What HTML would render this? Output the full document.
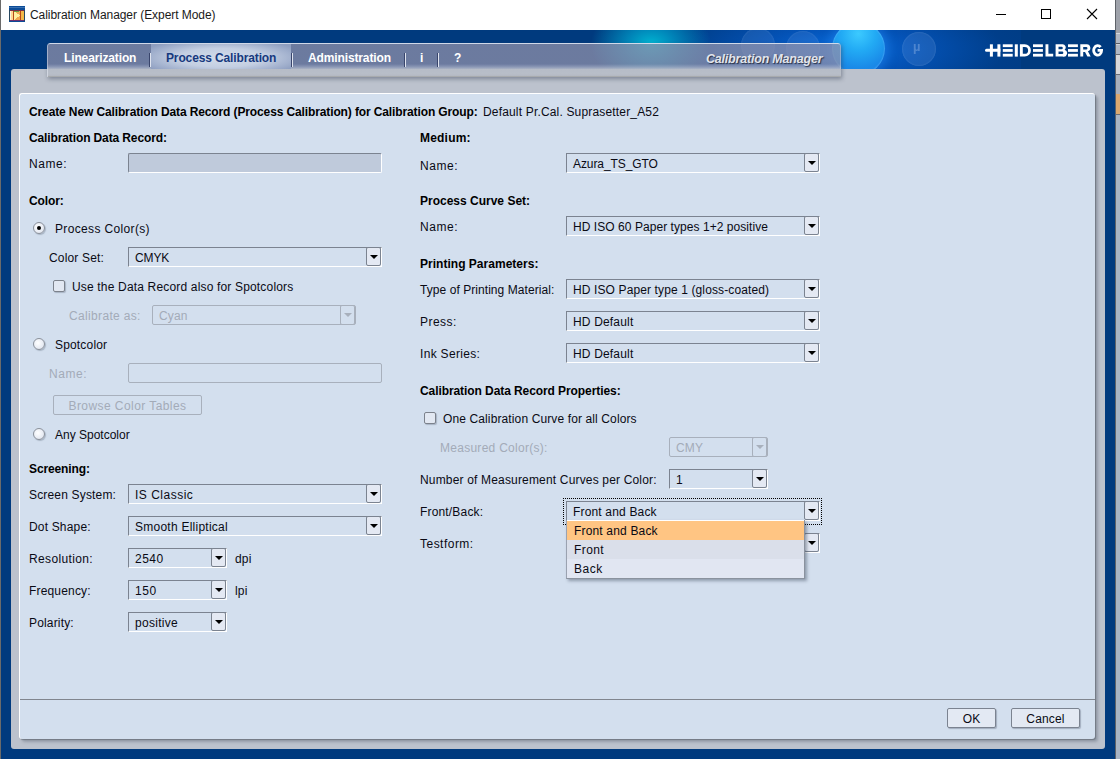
<!DOCTYPE html>
<html><head><meta charset="utf-8">
<style>
*{margin:0;padding:0;box-sizing:border-box}
html,body{width:1120px;height:759px;overflow:hidden;background:#a9b2c1;font-family:"Liberation Sans",sans-serif;font-size:12px;color:#0a0a14}
.a{position:absolute}
#strip{left:1116px;top:0;width:4px;height:759px;background:linear-gradient(to bottom,#9ea2aa 0,#9ea2aa 33px,#d4d8de 33px,#d4d8de 34px,#b0b8c4 34px,#b0b8c4 43px,#5a5e66 43px,#5a5e66 44px,#d0d4da 44px,#d0d4da 45px,#b0b8c4 45px,#b0b8c4 54px,#6a6e76 54px,#6a6e76 55px,#d8d8da 55px,#d8d8da 74px,#6a6e76 74px,#6a6e76 75px,#a8b0bc 75px,#a8b0bc 94px,#daa870 94px,#daa870 114px,#6a6e76 114px,#6a6e76 115px,#a8b4c4 115px)}
#win{left:0;top:0;width:1116px;height:759px;background:#003a7e;border-left:1px solid #6a6a6a;border-right:1px solid #5e6268;overflow:hidden}
#title{left:0;top:0;width:1116px;height:30px;background:#fff}
#ttext{left:30px;top:8px;font-size:12px;color:#1a1a1a;letter-spacing:-0.06px;white-space:nowrap}
#gray{left:11px;top:69px;width:1094px;height:680px;background:#bcc2cd;border-radius:3px}
#panel{left:19px;top:93px;width:1076px;height:646px;background:#d3dfee;border-radius:3px;border-top:1px solid #fff;border-left:1px solid #fff;box-shadow:1px 1px 1px rgba(90,96,106,.6),3px 3px 3px rgba(90,100,115,.4)}
#tabbar{left:47px;top:43px;width:794px;height:34px;border-radius:3px 3px 0 0;overflow:hidden;box-shadow:1px 2px 4px rgba(50,60,80,.45)}
#tabup{left:0;top:0;width:794px;height:26px;border-top:1px solid rgba(215,225,240,.85);border-left:1px solid rgba(200,210,230,.6);border-right:1px solid rgba(200,210,230,.4);border-radius:3px 3px 0 0;
 background:linear-gradient(to bottom,rgba(144,145,171,.75) 0,rgba(144,145,171,.75) 80%,rgba(165,170,192,.85) 92%,rgba(180,186,200,.95) 100%)}
#tablo{left:0;top:26px;width:794px;height:8px;border-left:1px solid rgba(220,225,235,.7);background:linear-gradient(to bottom,#b6bcc7 0,#b8bec8 60%,#b4b9c2 85%,#9e9f9e 100%)}
.tab{top:51px;font-weight:bold;color:#fff;letter-spacing:-0.13px;white-space:nowrap;font-size:12px}
.sep{top:53px;width:2px;height:14px;border-left:1px solid #39456c;border-right:1px solid #dfe4ef}
#seltab{left:151px;top:44px;width:140px;height:25px;background:radial-gradient(ellipse 62% 75% at 50% 55%,#d2dcea 0,#c4cfe2 50%,#9eadcb 85%,#8e9ec0 100%)}
.t{position:absolute;white-space:nowrap;letter-spacing:0.17px;line-height:14px}
.b{font-weight:bold;letter-spacing:-0.12px;color:#000}
.dis{color:#a3abb8}
.cb{position:absolute;height:20px;border-top:1px solid #7b8390;border-left:1px solid #7b8390;border-bottom:1px solid #fff;border-right:1px solid #fff;background:#d3dfee}
.cb .v{position:absolute;left:6px;top:3px;white-space:nowrap;letter-spacing:0.17px;line-height:14px}
.cb .ab{position:absolute;right:0;top:-1px;width:15px;height:19px;background:#e4e9f3;border:1px solid #7b8390;border-radius:2px}
.cb .ab:after{content:"";position:absolute;left:3px;top:7px;border-left:4px solid transparent;border-right:4px solid transparent;border-top:4px solid #000}
.cb.d{border-color:#a8b0bc;border-radius:2px}
.cb.d .ab{background:#d3dfee;border-color:#a8b0bc;top:-1px;height:20px;border-radius:2px}
.cb.d .ab:after{border-top-color:#a8b0bc}
.cb.d .v{color:#a3abb8}
.inp{position:absolute;height:20px;border-top:1px solid #7b8390;border-left:1px solid #7b8390;border-bottom:1px solid #fff;border-right:1px solid #fff;background:#bfcadb;border-radius:2px}
.inp.d{background:transparent;border-color:#a8b0bc}
.rad{position:absolute;width:12px;height:12px;border-radius:50%;border:1px solid #8a909a;background:radial-gradient(circle at 40% 40%,#fff 0,#e8ecf4 60%,#d8dee8 100%);box-shadow:1px 1px 1px rgba(90,100,120,.35)}
.rad.on:after{content:"";position:absolute;left:3px;top:3px;width:4px;height:4px;border-radius:50%;background:#000}
.chk{position:absolute;width:12px;height:12px;border-radius:2px;border:1px solid #7c828c;background:#e2e8f2;box-shadow:1px 1px 1px rgba(90,100,120,.35)}
.btn{position:absolute;height:20px;border:1px solid #7b8390;border-radius:2px;background:#e3e9f3;box-shadow:1px 1px 1px rgba(90,100,120,.4);text-align:center;line-height:19px;letter-spacing:0.17px;padding-top:1px}
.btn.d{background:transparent;border-color:#a8b0bc;box-shadow:none;color:#a3abb8}
</style></head><body>
<div id="strip" class="a"></div>
<div id="win" class="a">
 <div id="title" class="a"></div>
</div>
<!-- title bar content -->
<svg class="a" style="left:9px;top:6px" width="16" height="16" viewBox="0 0 16 16" shape-rendering="crispEdges">
 <rect x="0" y="0" width="16" height="16" fill="#0c4c98"/>
 <rect x="0" y="1" width="16" height="1" fill="#3a70b0"/>
 <rect x="1" y="4" width="14" height="11" fill="#f0a850"/>
 <rect x="0" y="4" width="1" height="11" fill="#284860"/>
 <rect x="15" y="4" width="1" height="11" fill="#284860"/>
 <rect x="1" y="4" width="14" height="1" fill="#7a3048"/>
 <rect x="1" y="14" width="14" height="1" fill="#6a3070"/>
 <rect x="1" y="5" width="1" height="9" fill="#fff4e0"/>
 <rect x="2" y="5" width="2" height="9" fill="#ffd890"/>
 <rect x="4" y="5" width="1" height="9" fill="#b84818"/>
 <path d="M5 5 L11 9.5 L5 14 Z" fill="#fff0a0"/>
 <rect x="5" y="5" width="5" height="1" fill="#68a048"/>
 <rect x="11" y="5" width="1" height="9" fill="#b84818"/>
 <rect x="12" y="5" width="3" height="9" fill="#f4b848"/>
</svg>
<div id="ttext" class="a">Calibration Manager (Expert Mode)</div>
<svg class="a" style="left:990px;top:5px" width="120" height="20">
 <rect x="6" y="9" width="10" height="1" fill="#000"/>
 <rect x="51.5" y="4.5" width="9" height="9" fill="none" stroke="#000" stroke-width="1"/>
 <path d="M97 4 L107 14 M107 4 L97 14" stroke="#000" stroke-width="1.1"/>
</svg>

<!-- header background glows -->
<div class="a" style="left:1px;top:30px;width:1114px;height:39px;overflow:hidden">
 <div class="a" style="left:520px;top:-60px;width:500px;height:160px;background:radial-gradient(ellipse 50% 50% at 64% 50%,rgba(10,110,225,.95) 0,rgba(5,90,200,.75) 30%,rgba(0,70,160,.35) 65%,rgba(0,58,126,0) 100%)"></div>
 <div class="a" style="left:590px;top:-28px;width:120px;height:84px;background:radial-gradient(ellipse 50% 50% at 50% 50%,rgba(0,180,210,1) 0,rgba(0,155,200,.75) 40%,rgba(0,100,170,0) 100%)"></div>
 <div class="a" style="left:740px;top:-2px;width:34px;height:34px;border-radius:50%;background:rgba(140,180,235,.14);box-shadow:inset 0 0 2px rgba(170,200,240,.25)"></div>
 <div class="a" style="left:785px;top:1px;width:34px;height:34px;border-radius:50%;background:rgba(140,180,235,.14);box-shadow:inset 0 0 2px rgba(170,200,240,.25)"></div>
 <div class="a" style="left:831px;top:-8px;width:53px;height:53px;border-radius:50%;background:radial-gradient(circle at 50% 22%,#3ccaff 0,#22aaf4 35%,#1a8ae8 70%,#1e80e4 100%);box-shadow:0 0 10px 4px rgba(30,130,235,.55),inset 0 0 1px 1px rgba(110,190,255,.35)"></div>
 <div class="a" style="left:901px;top:2px;width:34px;height:34px;border-radius:50%;background:rgba(140,180,235,.16);box-shadow:inset 0 0 2px rgba(170,200,240,.3)"></div>
 <div class="a" style="left:912px;top:9px;font-size:13px;color:rgba(200,220,250,.3);font-weight:bold;filter:blur(0.6px)">µ</div>
</div>
<!-- HEIDELBERG logo -->
<svg class="a" style="left:985px;top:44px" width="120" height="14" viewBox="0 -0.3 120 14" fill="#fff">
 <path d="M1.5 4.5 H15.4 V7.5 H1.5 A1.5 1.5 0 0 1 1.5 4.5 Z"/>
 <rect x="4.9" y="0" width="3" height="12.3"/>
 <rect x="12.4" y="0" width="3" height="12.3"/>
 <rect x="17.8" y="0" width="9.9" height="2.8"/><rect x="17.8" y="4.75" width="9.9" height="2.8"/><rect x="17.8" y="9.5" width="9.9" height="2.8"/>
 <rect x="29.8" y="0" width="3" height="12.3"/>
 <path fill-rule="evenodd" d="M34.9 0 H39.8 A6.1 6.15 0 0 1 39.8 12.3 H34.9 Z M37.8 2.8 H39.8 A3.3 3.35 0 0 1 39.8 9.5 H37.8 Z"/>
 <rect x="48" y="0" width="9.9" height="2.8"/><rect x="48" y="4.75" width="9.9" height="2.8"/><rect x="48" y="9.5" width="9.9" height="2.8"/>
 <path d="M60.5 0 H63.4 V9.5 H68.2 V12.3 H60.5 Z"/>
 <path fill-rule="evenodd" d="M70.6 0 H77 A3.1 3.1 0 0 1 79.6 5.4 A3.3 3.4 0 0 1 77.5 12.3 H70.6 Z M73.5 2.5 V4.9 H76.6 A1.2 1.2 0 0 0 76.6 2.5 Z M73.5 7.3 V9.8 H77.1 A1.25 1.25 0 0 0 77.1 7.3 Z"/>
 <rect x="83" y="0" width="9.9" height="2.8"/><rect x="83" y="4.75" width="9.9" height="2.8"/><rect x="83" y="9.5" width="9.9" height="2.8"/>
 <path fill-rule="evenodd" d="M95.3 0 H101.5 A3.6 3.6 0 0 1 102.9 7.0 L105.7 12.3 H102.4 L100.0 7.6 H98.2 V12.3 H95.3 Z M98.2 2.6 V5.1 H101.2 A1.25 1.25 0 0 0 101.2 2.6 Z"/>
 <path d="M115.6 2.9 A3.95 4.75 0 1 0 116.6 6.15 H112.6" fill="none" stroke="#fff" stroke-width="2.8"/>
</svg>

<div id="gray" class="a"></div>
<div id="tabbar" class="a"><div id="tabup" class="a"></div><div id="tablo" class="a"></div></div>
<div id="seltab" class="a"></div>
<div class="a tab" style="left:64px">Linearization</div>
<div class="a sep" style="left:149px"></div>
<div class="a tab" style="left:166px;color:#17397e">Process Calibration</div>
<div class="a sep" style="left:291px"></div>
<div class="a tab" style="left:308px">Administration</div>
<div class="a sep" style="left:404px"></div>
<div class="a tab" style="left:420px">i</div>
<div class="a sep" style="left:437px"></div>
<div class="a tab" style="left:454px">?</div>
<div class="a" style="left:706px;top:52px;font-weight:bold;font-style:italic;font-size:12.5px;color:#e2e5ec;letter-spacing:-0.2px;text-shadow:1px 1px 1px rgba(30,40,60,.9);white-space:nowrap">Calibration Manager</div>

<div id="panel" class="a"></div>

<!-- CONTENT -->
<div id="content">
<div class="t b" style="left:29px;top:105px">Create New Calibration Data Record (Process Calibration) for Calibration Group:</div>
<div class="t" style="left:483px;top:105px">Default Pr.Cal. Suprasetter_A52</div>

<div class="t b" style="left:29px;top:131px">Calibration Data Record:</div>
<div class="t" style="left:29px;top:157px;letter-spacing:0.55px">Name:</div>
<div class="inp" style="left:128px;top:153px;width:254px"></div>

<div class="t b" style="left:29px;top:194px">Color:</div>
<div class="rad on" style="left:33px;top:222px"></div>
<div class="t" style="left:55px;top:222px;letter-spacing:0.35px">Process Color(s)</div>
<div class="t" style="left:49px;top:251px">Color Set:</div>
<div class="cb" style="left:128px;top:247px;width:254px"><span class="v" style="letter-spacing:-0.1px">CMYK</span><span class="ab"></span></div>
<div class="chk" style="left:53px;top:280px"></div>
<div class="t" style="left:72px;top:280px">Use the Data Record also for Spotcolors</div>
<div class="t dis" style="left:69px;top:309px;letter-spacing:0.34px">Calibrate as:</div>
<div class="cb d" style="left:152px;top:305px;width:204px"><span class="v">Cyan</span><span class="ab"></span></div>
<div class="rad" style="left:33px;top:338px"></div>
<div class="t" style="left:55px;top:338px">Spotcolor</div>
<div class="t dis" style="left:49px;top:367px;letter-spacing:0.55px">Name:</div>
<div class="inp d" style="left:128px;top:363px;width:254px"></div>
<div class="btn d" style="left:53px;top:395px;width:149px;padding-top:1px;letter-spacing:0.43px">Browse Color Tables</div>
<div class="rad" style="left:33px;top:428px"></div>
<div class="t" style="left:55px;top:428px;letter-spacing:0px">Any Spotcolor</div>

<div class="t b" style="left:29px;top:462px">Screening:</div>
<div class="t" style="left:29px;top:488px">Screen System:</div>
<div class="cb" style="left:128px;top:484px;width:254px"><span class="v" style="letter-spacing:0.5px">IS Classic</span><span class="ab"></span></div>
<div class="t" style="left:29px;top:520px">Dot Shape:</div>
<div class="cb" style="left:128px;top:516px;width:254px"><span class="v" style="letter-spacing:0.25px">Smooth Elliptical</span><span class="ab"></span></div>
<div class="t" style="left:29px;top:552px;letter-spacing:0.35px">Resolution:</div>
<div class="cb" style="left:128px;top:548px;width:99px"><span class="v" style="letter-spacing:0.5px">2540</span><span class="ab"></span></div>
<div class="t" style="left:235px;top:552px">dpi</div>
<div class="t" style="left:29px;top:584px">Frequency:</div>
<div class="cb" style="left:128px;top:580px;width:99px"><span class="v" style="letter-spacing:0.6px">150</span><span class="ab"></span></div>
<div class="t" style="left:235px;top:584px">lpi</div>
<div class="t" style="left:29px;top:616px">Polarity:</div>
<div class="cb" style="left:128px;top:612px;width:99px"><span class="v" style="letter-spacing:0.3px">positive</span><span class="ab"></span></div>

<div class="t b" style="left:420px;top:131px;letter-spacing:0.2px">Medium:</div>
<div class="t" style="left:420px;top:159px;letter-spacing:0.55px">Name:</div>
<div class="cb" style="left:566px;top:153px;width:254px"><span class="v" style="letter-spacing:-0.08px">Azura_TS_GTO</span><span class="ab"></span></div>
<div class="t b" style="left:420px;top:194px;letter-spacing:0px">Process Curve Set:</div>
<div class="t" style="left:420px;top:220px;letter-spacing:0.55px">Name:</div>
<div class="cb" style="left:566px;top:216px;width:254px"><span class="v" style="letter-spacing:0.055px">HD ISO 60 Paper types 1+2 positive</span><span class="ab"></span></div>
<div class="t b" style="left:420px;top:257px;letter-spacing:0.02px">Printing Parameters:</div>
<div class="t" style="left:420px;top:283px;letter-spacing:0.06px">Type of Printing Material:</div>
<div class="cb" style="left:566px;top:279px;width:254px"><span class="v" style="letter-spacing:0.12px">HD ISO Paper type 1 (gloss-coated)</span><span class="ab"></span></div>
<div class="t" style="left:420px;top:315px;letter-spacing:0.45px">Press:</div>
<div class="cb" style="left:566px;top:311px;width:254px"><span class="v">HD Default</span><span class="ab"></span></div>
<div class="t" style="left:420px;top:347px;letter-spacing:0.32px">Ink Series:</div>
<div class="cb" style="left:566px;top:343px;width:254px"><span class="v">HD Default</span><span class="ab"></span></div>
<div class="t b" style="left:420px;top:384px;letter-spacing:-0.08px">Calibration Data Record Properties:</div>
<div class="chk" style="left:424px;top:412px"></div>
<div class="t" style="left:443px;top:412px;letter-spacing:0.12px">One Calibration Curve for all Colors</div>
<div class="t dis" style="left:440px;top:441px;letter-spacing:0.27px">Measured Color(s):</div>
<div class="cb d" style="left:669px;top:437px;width:99px"><span class="v">CMY</span><span class="ab"></span></div>
<div class="t" style="left:420px;top:473px">Number of Measurement Curves per Color:</div>
<div class="cb" style="left:669px;top:469px;width:99px"><span class="v">1</span><span class="ab"></span></div>
<div class="t" style="left:420px;top:505px">Front/Back:</div>
<div class="a" style="left:563px;top:498px;width:259px;height:27px;border:1px dotted #000"></div>
<div class="cb" style="left:566px;top:501px;width:254px"><span class="v">Front and Back</span><span class="ab"></span></div>
<div class="t" style="left:420px;top:537px;letter-spacing:0.48px">Testform:</div>
<div class="cb" style="left:566px;top:533px;width:254px"><span class="v"></span><span class="ab"></span></div>
<div class="a" style="left:566px;top:520px;width:239px;height:59px;background:#fff;border-left:1px solid #9aa2b0;border-right:1px solid #8a929e;border-bottom:1px solid #8a929e;box-shadow:2px 2px 3px rgba(60,70,90,.45)">
 <div class="a" style="left:0;top:1px;width:237px;height:19px;background:#ffc583"></div>
 <div class="a" style="left:0;top:20px;width:237px;height:19px;background:#dadfea"></div>
 <div class="a" style="left:0;top:39px;width:237px;height:19px;background:#e1e6f2"></div>
 <div class="t" style="left:7px;top:4px">Front and Back</div>
 <div class="t" style="left:7px;top:23px;letter-spacing:0.4px">Front</div>
 <div class="t" style="left:7px;top:42px;letter-spacing:0.5px">Back</div>
</div>

<div class="a" style="left:20px;top:699px;width:1075px;height:1px;background:#80858e"></div>
<div class="btn" style="left:947px;top:708px;width:49px">OK</div>
<div class="btn" style="left:1011px;top:708px;width:69px">Cancel</div>
</div>
</body></html>
